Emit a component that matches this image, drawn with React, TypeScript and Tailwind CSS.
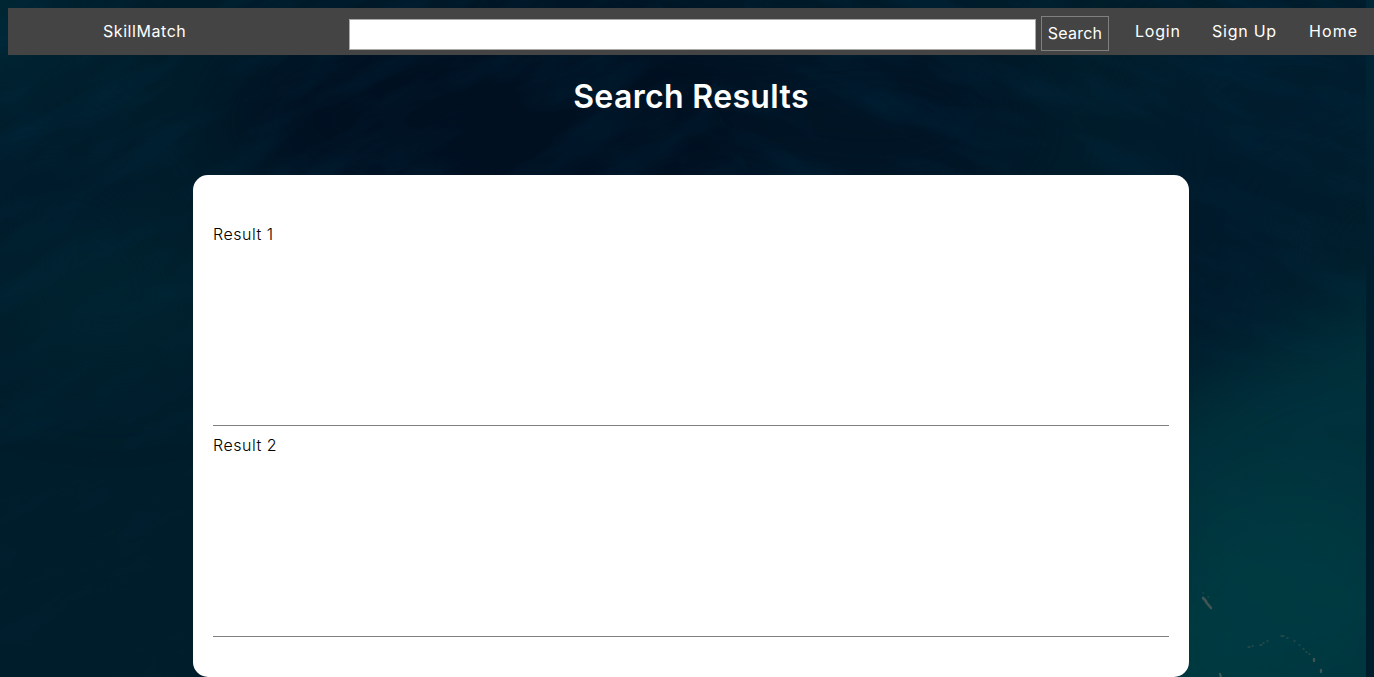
function Ocean() {
  return (
    <svg className="absolute inset-0 -z-10 h-full w-full" viewBox="0 0 1374 677" preserveAspectRatio="none" aria-hidden="true">
      <defs>
        <filter id="soft" x="-50%" y="-50%" width="200%" height="200%" colorInterpolationFilters="sRGB">
          <feGaussianBlur stdDeviation="42" />
        </filter>
        <filter id="waves" x="0" y="0" width="100%" height="100%" colorInterpolationFilters="sRGB">
          <feTurbulence type="fractalNoise" baseFrequency="0.009 0.03" numOctaves="6" seed="8" />
          <feColorMatrix values="0 0 0 0 0  0 0 0 0 0.2  0 0 0 0 0.3  1.6 0 0 0 -0.62" />
        </filter>
        <linearGradient id="fade" x1="0" y1="0" x2="0" y2="1">
          <stop offset="0" stopColor="#fff" />
          <stop offset="0.5" stopColor="#fff" stopOpacity="0.6" />
          <stop offset="1" stopColor="#fff" stopOpacity="0.2" />
        </linearGradient>
        <mask id="waveMask">
          <rect width="1374" height="677" fill="url(#fade)" />
        </mask>
        <linearGradient id="edge" x1="0" y1="0" x2="0" y2="1">
          <stop offset="0" stopColor="#002637" />
          <stop offset="0.3" stopColor="#001f30" />
          <stop offset="0.6" stopColor="#001b2b" />
          <stop offset="1" stopColor="#001d2b" />
        </linearGradient>
        <clipPath id="tile">
          <rect width="1366" height="677" />
        </clipPath>
      </defs>
      <rect width="1374" height="677" fill="url(#edge)" />
      <g clipPath="url(#tile)">
        <rect width="1366" height="677" fill="#001d2b" />
        <g filter="url(#soft)">
          <ellipse cx="550" cy="120" rx="330" ry="120" fill="#001021" />
          <ellipse cx="880" cy="120" rx="160" ry="100" fill="#001425" />
          <ellipse cx="0" cy="20" rx="70" ry="60" fill="#002937" />
          <ellipse cx="60" cy="190" rx="110" ry="50" fill="#001b2c" />
          <ellipse cx="110" cy="300" rx="110" ry="70" fill="#00232f" />
          <ellipse cx="1290" cy="100" rx="160" ry="90" fill="#001d2e" />
          <ellipse cx="1200" cy="250" rx="100" ry="120" fill="#001a2b" />
          <path d="M1120 430 L1230 370 L1460 260 V800 H1120 Z" fill="#00313b" />
          <ellipse cx="1290" cy="600" rx="130" ry="110" fill="#003a41" />
          <ellipse cx="1190" cy="670" rx="70" ry="60" fill="#003c41" />
        </g>
        <g mask="url(#waveMask)" opacity="0.42">
          <rect x="-300" y="-300" width="1010" height="1100" filter="url(#waves)" transform="rotate(-28 300 200)" />
          <rect x="690" y="-400" width="1000" height="1200" filter="url(#waves)" transform="rotate(22 1000 200)" />
        </g>
        <g fill="none" stroke="#57605a" strokeLinecap="round" opacity="0.75">
          <path d="M1203 598l3 3M1206 602l5 6" strokeWidth="2.6" />
          <path d="M1203 593h.5M1208 597h.5" strokeWidth="1" />
          <path d="M1248 647h2M1252 646h1M1260 645h2M1263 643h1M1267 641h1" strokeWidth="1.2" />
          <path d="M1281 636h3M1287 638h1M1294 641h1M1299 645h1M1303 649h1M1306 652h1M1309 654h1" strokeWidth="1.2" />
          <path d="M1314 659v2M1321 670v2M1220 674l1 3" strokeWidth="2.3" />
        </g>
      </g>
    </svg>
  );
}

const results = ["Result 1", "Result 2"];

export default function App() {
  return (
    <div className="relative isolate h-[677px] w-[1374px] overflow-hidden pt-2 pl-2 font-[Inter,sans-serif] text-base font-normal text-white">
      <Ocean />
      <nav className="flex h-[47px] w-[1366px] items-start bg-[#444444] leading-5">
        <a href="#" className="mt-[13px] ml-[95px] w-[246px] shrink-0 tracking-[0.56px]">SkillMatch</a>
        <input aria-label="Search" className="mt-[11px] h-[31px] w-[687px] shrink-0 border border-[#a9a9a9] bg-white px-2 text-black" />
        <button type="button" className="mt-2 ml-[5px] h-[35px] w-[68px] shrink-0 border border-[#808080] pb-0.5 text-center tracking-[0.25px]">Search</button>
        <a href="#" className="mt-[13px] ml-[26px] w-[77px] shrink-0 tracking-[0.8px]">Login</a>
        <a href="#" className="mt-[13px] w-[97px] shrink-0 tracking-[0.75px]">Sign Up</a>
        <a href="#" className="mt-[13px] shrink-0 tracking-[1.1px]">Home</a>
      </nav>
      <h1 className="mt-[22px] h-10 text-center text-[32px] leading-10 font-semibold tracking-[0.35px]">Search Results</h1>
      <main className="mt-[58px] ml-[185px] h-[502px] w-[996px] rounded-[15px] bg-white px-5 pt-10 text-black">
        {results.map((result) => (
          <section key={result} className="h-[211px] border-b border-[#808080] pt-[9px] leading-5 font-light tracking-[0.5px]">
            {result}
          </section>
        ))}
      </main>
    </div>
  );
}
